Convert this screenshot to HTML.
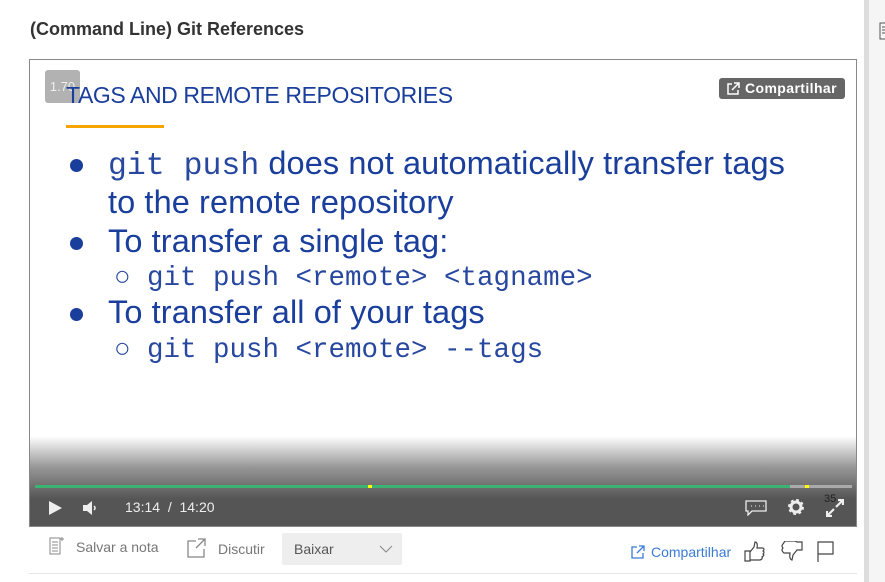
<!DOCTYPE html>
<html><head><style>
body{margin:0;width:885px;height:582px;background:#fff;font-family:"Liberation Sans",sans-serif;position:relative;overflow:hidden}
.abs{position:absolute}
.title{left:30px;top:19px;font-size:18px;font-weight:bold;color:#333}
.player{left:29px;top:59px;width:826px;height:466px;border:1px solid #888;background:#fff;overflow:hidden}
.h{left:36px;top:22px;font-size:23px;color:#1a3e9c;letter-spacing:-0.4px}
.u{left:36px;top:65px;width:98px;height:3px;background:#f5a400}
.line{color:#1a3e9c;font-size:32.5px;white-space:nowrap;letter-spacing:0.1px}
.mono{font-family:"Liberation Mono",monospace;font-size:31.5px;letter-spacing:0;color:#2848a0}
.dot{width:13px;height:13px;border-radius:50%;background:#1a3e9c}
.grad{left:0;bottom:0;width:826px;height:90px;background:linear-gradient(to bottom,rgba(80,80,80,0),rgba(80,80,80,.6) 35%,#555 70%,#555)}
.ctl{color:#eee;font-size:14px}
.bot{color:#777;font-size:14px}
</style></head><body>
<div class="abs title">(Command Line) Git References</div>
<div class="abs player">
 <div class="abs" style="left:15px;top:10px;width:35px;height:33px;background:#aaa;opacity:.9;border-radius:3px;color:#eee;font-size:13px;line-height:34px;text-align:center">1.70</div>
 <div class="abs h">TAGS AND REMOTE REPOSITORIES</div>
 <div class="abs u"></div>
 <div class="abs" style="left:689px;top:18px;background:#666;color:#fff;font-size:14px;font-weight:bold;border-radius:3px;padding:2px 8px 3px 26px;letter-spacing:0.4px">Compartilhar
  <svg class="abs" style="left:7px;top:4px" width="14" height="14" viewBox="0 0 14 14" fill="none" stroke="#fff" stroke-width="1.5"><path d="M6 2H2v10h10V8M8 1h5v5M13 1L6 8"/></svg></div>
 <div class="abs dot" style="left:40px;top:99px"></div>
 <div class="abs line" style="left:78px;top:85px"><span class="mono">git push</span> does not automatically transfer tags</div>
 <div class="abs line" style="left:78px;top:124px">to the remote repository</div>
 <div class="abs dot" style="left:40px;top:177px"></div>
 <div class="abs line" style="left:78px;top:163px">To transfer a single tag:</div>
 <div class="abs line mono" style="left:84px;top:203px;font-size:27.5px">○ git push &lt;remote&gt; &lt;tagname&gt;</div>
 <div class="abs dot" style="left:40px;top:248px"></div>
 <div class="abs line" style="left:78px;top:234px">To transfer all of your tags</div>
 <div class="abs line mono" style="left:84px;top:275px;font-size:27.5px">○ git push &lt;remote&gt; --tags</div>
 <div class="abs grad"></div>
 <div class="abs" style="left:5px;top:425px;width:817px;height:3px;background:#aaa"></div>
 <div class="abs" style="left:5px;top:425px;width:755px;height:3px;background:#3cb371"></div>
 <div class="abs" style="left:338px;top:425px;width:4px;height:3px;background:#ff0"></div>
 <div class="abs" style="left:775px;top:425px;width:4px;height:3px;background:#ff0"></div>
 <svg class="abs" style="left:18px;top:440px" width="14" height="16"><path d="M1 1L14 8L1 15Z" fill="#eee"/></svg>
 <svg class="abs" style="left:52px;top:441px" width="16" height="14"><path d="M1 4h4l5-4v14l-5-4H1Z" fill="#eee"/><path d="M12 5q2 2 0 4" stroke="#eee" fill="none" stroke-width="1.5"/></svg>
 <div class="abs ctl" style="left:95px;top:439px">13:14 &nbsp;/&nbsp; 14:20</div>
 <svg class="abs" style="left:715px;top:440px" width="22" height="16"><path d="M1 1h20v10H7l-4 4v-4H1Z" fill="none" stroke="#eee" stroke-width="1.3"/><path d="M6 6h1M10 6h1M14 6h1M18 6h1" stroke="#eee"/></svg>
 <svg class="abs" style="left:757px;top:438px" width="18" height="18" viewBox="0 0 18 18"><circle cx="9" cy="9" r="6" fill="none" stroke="#eee" stroke-width="4" stroke-dasharray="2.4 2.3"/><circle cx="9" cy="9" r="5" fill="none" stroke="#eee" stroke-width="3"/></svg>
 <div class="abs" style="left:794px;top:433px;font-size:11px;color:#222">35</div>
 <svg class="abs" style="left:796px;top:439px" width="18" height="18"><path d="M10 8l7-7M12 1h5v5M8 10l-7 7M1 12v5h5" stroke="#eee" stroke-width="2.2" fill="none"/></svg>
</div>
<svg class="abs" style="left:49px;top:536px" width="16" height="19"><path d="M1 2h10v16H1Z M3 6h6M3 9h6M3 12h6M3 15h6M13 1v4M11 3h4" stroke="#888" fill="none"/></svg>
<div class="abs bot" style="left:76px;top:539px">Salvar a nota</div>
<svg class="abs" style="left:187px;top:538px" width="20" height="20"><path d="M9 3H1v16h16v-8M11 1h7v7M18 1L9 10" stroke="#888" fill="none" stroke-width="1.3"/></svg>
<div class="abs bot" style="left:218px;top:541px">Discutir</div>
<div class="abs" style="left:282px;top:533px;width:120px;height:32px;background:#eee;border-radius:2px"></div>
<div class="abs" style="left:294px;top:541px;font-size:14px;color:#555">Baixar</div>
<svg class="abs" style="left:379px;top:545px" width="14" height="8"><path d="M1 1l6 6 6-6" stroke="#888" fill="none"/></svg>
<svg class="abs" style="left:631px;top:545px" width="14" height="14"><path d="M6 2H1v11h11V8M8 1h5v5M13 1L6 8" stroke="#3a7bd5" fill="none" stroke-width="1.3"/></svg>
<div class="abs" style="left:651px;top:544px;font-size:14px;color:#3a7bd5">Compartilhar</div>
<svg class="abs" style="left:744px;top:541px" width="22" height="22"><path d="M1 10h5v10H1ZM6 11l4-5 1-5q3 0 2 6h6q2 1 0 3 2 1 0 3 2 1-1 3 1 2-2 3H6" stroke="#444" fill="none" stroke-width="1.2"/></svg>
<svg class="abs" style="left:781px;top:541px" width="22" height="22"><path d="M2 3q-2 2 0 4-2 2 0 4l1 1h6q-1 6 2 7l1-5 4-5h5V1h-5l-2-1H4Z" stroke="#444" fill="none" stroke-width="1.2"/></svg>
<svg class="abs" style="left:817px;top:541px" width="18" height="22"><path d="M1 21V1h15v12H1" stroke="#444" fill="none" stroke-width="1.2"/></svg>
<div class="abs" style="left:29px;top:573px;width:828px;height:1px;background:#e5e5e5"></div>
<div class="abs" style="left:864px;top:0;width:5px;height:582px;background:#ddd"></div>
<div class="abs" style="left:869px;top:0;width:16px;height:582px;background:#f5f5f5"></div>
<svg class="abs" style="left:879px;top:22px" width="8" height="18"><path d="M1 1h10v16H1ZM3 5h6M3 8h6M3 11h6" stroke="#555" fill="none"/></svg>
</body></html>
